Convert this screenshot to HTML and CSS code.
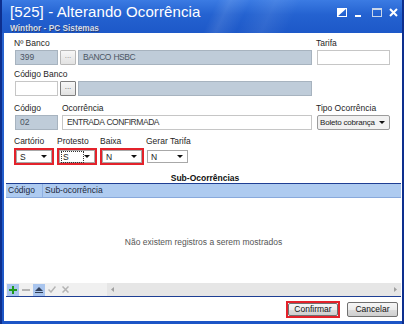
FILE: index.html
```html
<!DOCTYPE html>
<html>
<head>
<meta charset="utf-8">
<link rel="stylesheet" href="styles.css">
</head>
<body>
<div class="window">
  <div class="titlebar">
    <div class="titles">
      <div class="title">[525] - Alterando Ocorrência</div>
      <div class="subtitle">Winthor - PC Sistemas</div>
    </div>
    <div class="controls">
      <svg class="ctl" width="10" height="9" viewBox="0 0 10 9"><rect x="0.5" y="0.5" width="9" height="8" fill="none" stroke="#fff"/><polygon points="0,9 10,0 0,0" fill="#fff"/></svg>
      <svg class="ctl min" width="6" height="9" viewBox="0 0 6 9"><rect x="0" y="7" width="6" height="2" fill="#fff"/></svg>
      <svg class="ctl max" width="10" height="9" viewBox="0 0 10 9"><rect x="0.5" y="0.5" width="9" height="8" fill="none" stroke="#c9d6ea"/><rect x="0" y="0" width="10" height="2" fill="#c9d6ea"/></svg>
      <svg class="ctl close" width="9" height="9" viewBox="0 0 9 9"><path d="M1 1 L8 8 M8 1 L1 8" stroke="#fff" stroke-width="2"/></svg>
    </div>
  </div>
  <div class="client">
    <div class="form">
      <div class="row r1">
        <div class="field w297">
          <div class="lbl">Nº Banco</div>
          <div class="inputs">
            <div class="input ro w43">399</div>
            <div class="dots">...</div>
            <div class="input ro w234 caps">BANCO HSBC</div>
          </div>
        </div>
        <div class="field w73">
          <div class="lbl">Tarifa</div>
          <div class="input w73"></div>
        </div>
      </div>
      <div class="row r2">
        <div class="field w297">
          <div class="lbl">Código Banco</div>
          <div class="inputs">
            <div class="input w43"></div>
            <div class="dots focus">...</div>
            <div class="input ro w234"></div>
          </div>
        </div>
      </div>
      <div class="row r3">
        <div class="field w43">
          <div class="lbl">Código</div>
          <div class="input ro w43">02</div>
        </div>
        <div class="field w250">
          <div class="lbl">Ocorrência</div>
          <div class="input w250 caps">ENTRADA CONFIRMADA</div>
        </div>
        <div class="field w73">
          <div class="lbl">Tipo Ocorrência</div>
          <div class="select gray w73"><span class="tight">Boleto cobrança</span><i class="arrow"></i></div>
        </div>
      </div>
      <div class="row r4">
        <div class="field">
          <div class="lbl">Cartório</div>
          <div class="hl w40"><div class="select"><span>S</span><i class="arrow"></i></div></div>
        </div>
        <div class="field">
          <div class="lbl">Protesto</div>
          <div class="hl w40"><div class="select"><span class="focusbox">S</span><i class="arrow"></i></div></div>
        </div>
        <div class="field">
          <div class="lbl">Baixa</div>
          <div class="hl w44"><div class="select"><span>N</span><i class="arrow"></i></div></div>
        </div>
        <div class="field">
          <div class="lbl gt">Gerar Tarifa</div>
          <div class="plain w41"><div class="select"><span>N</span><i class="arrow"></i></div></div>
        </div>
      </div>
    </div>
    <div class="section-title">Sub-Ocorrências</div>
    <div class="grid">
      <div class="grid-head">
        <div class="col c1">Código</div>
        <div class="col c2">Sub-ocorrência</div>
      </div>
      <div class="grid-body">Não existem registros a serem mostrados</div>
      <div class="grid-toolbar">
        <div class="tb on"><svg width="8" height="8" viewBox="0 0 8 8"><path d="M4 0V8M0 4H8" stroke="#1f9a1f" stroke-width="2"/></svg></div>
        <div class="tb"><svg width="8" height="8" viewBox="0 0 8 8"><path d="M0 4H8" stroke="#b4b4b4" stroke-width="2"/></svg></div>
        <div class="tb on"><svg width="8" height="6" viewBox="0 0 8 6"><polygon points="4,0 8,4 0,4" fill="#33415a"/><rect x="0" y="5" width="8" height="1" fill="#33415a"/></svg></div>
        <div class="tb"><svg width="8" height="7" viewBox="0 0 8 7"><path d="M0.5 3.5 L3 6 L7.5 0.5" stroke="#b4b4b4" stroke-width="1.5" fill="none"/></svg></div>
        <div class="tb"><svg width="7" height="7" viewBox="0 0 7 7"><path d="M0.5 0.5 L6.5 6.5 M6.5 0.5 L0.5 6.5" stroke="#b4b4b4" stroke-width="1.5"/></svg></div>
        <div class="tb-space"></div>
        <div class="hscroll">
          <svg width="3" height="5" viewBox="0 0 3 5"><polygon points="3,0 3,5 0,2.5" fill="#a0a0a0"/></svg>
          <svg width="3" height="5" viewBox="0 0 3 5"><polygon points="0,0 0,5 3,2.5" fill="#a0a0a0"/></svg>
        </div>
      </div>
    </div>
    <div class="actions">
      <div class="hl btnwrap"><div class="btn">Confirmar</div></div>
      <div class="btn cancel">Cancelar</div>
    </div>
  </div>
</div>
</body>
</html>
```
FILE: styles.css
```css
* { box-sizing: border-box; }
html, body { margin: 0; padding: 0; }
body {
  width: 404px;
  height: 324px;
  overflow: hidden;
  font-family: "Liberation Sans", Arial, sans-serif;
  font-size: 8.5px;
  color: #222;
}
.window {
  width: 404px;
  height: 324px;
  display: flex;
  flex-direction: column;
  background: linear-gradient(to bottom, #2a66d2 0%, #1c55c6 100%);
  border-left: 2px solid #0d2f8e;
  border-right: 2px solid #0d2f8e;
  padding: 0 0 3px 2px;
}
.titlebar {
  height: 33px;
  flex: none;
  display: flex;
  justify-content: space-between;
  margin-left: -2px;
  padding-left: 8px;
  background:
    linear-gradient(115deg, transparent 0%, transparent 52%, rgba(255,255,255,0.10) 55%, transparent 60%, rgba(255,255,255,0.08) 66%, transparent 72%),
    linear-gradient(to bottom, #3b7be3 0%, #2462d0 45%, #1d58c8 100%);
}
.title {
  color: #fff;
  font-size: 15px;
  line-height: 16px;
  padding-top: 4px;
  letter-spacing: 0.1px;
}
.subtitle {
  color: #d6dde8;
  font-weight: bold;
  font-size: 8.3px;
  line-height: 10px;
  margin-top: 3px;
  text-shadow: 1px 1px 0 #29407a;
}
.controls {
  display: flex;
  align-items: flex-start;
  padding-top: 8px;
  padding-right: 4px;
}
.ctl { display: block; margin-left: 7px; }
.ctl.min { margin-left: 8px; }
.ctl.max { margin-left: 11px; }
.ctl.close { margin-left: 7px; }

.client {
  flex: 1;
  background: #fff;
  display: flex;
  flex-direction: column;
  margin-right: 0;
}
.form { padding: 5px 0 0 10px; }
.row { display: flex; align-items: flex-start; }
.r2 { margin-top: 4px; }
.r3 { margin-top: 7px; }
.r4 { margin-top: 6px; }
.r1 .field + .field, .r3 .field + .field { margin-left: 5px; }
.r3 .field.w250 { margin-left: 4px; }
.r3 .field.w43 { margin-left: 1px; }
.r1 .field.w297, .r2 .field.w297 { margin-left: 1px; }
.r1 .field.w73 .lbl, .r3 .field.w73 .lbl { margin-left: -1px; }
.r3 .field.w43 .lbl, .r1 .field.w297 .lbl, .r2 .field.w297 .lbl { margin-left: -1px; }
.r4 .field + .field { margin-left: 3px; }
.lbl {
  height: 10px;
  line-height: 10px;
  margin-bottom: 2px;
  color: #1e1e1e;
  white-space: nowrap;
}
.lbl.gt { margin-left: -1px; }
.w297 { width: 297px; }
.w43 { width: 43px; }
.w234 { width: 234px; }
.w250 { width: 250px; }
.w73 { width: 73px; }
.w40 { width: 40px; }
.w41 { width: 41px; }
.w44 { width: 44px; }
.inputs { display: flex; gap: 2px; }
.input {
  height: 15px;
  border: 1px solid #c6c6c6;
  background: #fff;
  line-height: 13px;
  padding-left: 4px;
  color: #333;
  white-space: nowrap;
  overflow: hidden;
}
.input.ro {
  background: #bfccd9;
  border-color: #a7b3bf;
  color: #4b5563;
}
.caps { letter-spacing: -0.45px; word-spacing: 0.5px; }
.dots {
  width: 16px;
  height: 15px;
  border: 1px solid #b8b8b8;
  background: linear-gradient(#f7f7f7, #e2e2e2);
  color: #8a8a8a;
  text-align: center;
  line-height: 10px;
  font-size: 8px;
  border-radius: 1px;
}
.dots.focus { border-color: #7e7e7e; color: #555; }
.select {
  height: 15px;
  border: 1px solid #a8a8a8;
  background: #fff;
  display: flex;
  align-items: center;
  justify-content: space-between;
  padding: 0 4px 0 3px;
  color: #222;
  white-space: nowrap;
}
.select.gray { background: #f1f1f1; border-color: #9c9c9c; border-radius: 2px; padding: 0 4px 0 2px; }
.tight { font-size: 8px; letter-spacing: -0.2px; }
.arrow {
  display: block;
  width: 0; height: 0;
  border-left: 3px solid transparent;
  border-right: 3px solid transparent;
  border-top: 3px solid #111;
  flex: none;
  margin-left: 2px;
}
.hl {
  border: 2px solid #e3222b;
  padding: 0;
}
.hl .select { height: 13px; }
.plain { padding: 2px 0; }
.plain .select { height: 13px; }
.focusbox {
  outline: 1px dotted #333;
  outline-offset: 1px;
  padding-right: 13px;
  line-height: 8px;
}
.section-title {
  margin-top: 8px;
  height: 10px;
  line-height: 10px;
  text-align: center;
  font-weight: bold;
  color: #111;
  padding-left: 4px;
}
.grid {
  margin: 0 1px 0 2px;
  border-top: 1px solid #1e3f94;
  border-bottom: 1px solid #1e3f94;
  display: flex;
  flex-direction: column;
}
.grid-head {
  height: 14px;
  background: #aecbf0;
  border-bottom: 1px solid #88a9dc;
  display: flex;
}
.col { line-height: 13px; color: #1e2a3c; }
.c1 { width: 37px; padding-left: 2px; border-right: 1px solid #8fb0e2; }
.c2 { padding-left: 2px; }
.grid-body {
  height: 85px;
  background: #fff;
  display: flex;
  align-items: center;
  justify-content: center;
  color: #555;
  padding-top: 2px;
}
.grid-toolbar {
  height: 13px;
  background: #f0f0f0;
  display: flex;
  align-items: center;
  padding-left: 1px;
}
.tb {
  width: 12px;
  height: 12px;
  margin-right: 1px;
  display: flex;
  align-items: center;
  justify-content: center;
}
.tb.on { background: #a9c5ee; }
.tb-space { width: 35px; height: 12px; }
.hscroll {
  flex: 1;
  height: 13px;
  background: #e6e6e6;
  display: flex;
  align-items: center;
  justify-content: space-between;
  padding: 0 4px 0 4px;
}
.actions {
  height: 24px;
  display: flex;
  justify-content: flex-end;
  align-items: flex-start;
  padding: 5px 4px 0 0;
  gap: 7px;
}
.btn {
  height: 15px;
  border: 1px solid #707070;
  border-radius: 2px;
  background: linear-gradient(#f6f6f6 0%, #ebebeb 50%, #dcdcdc 51%, #cfcfcf 100%);
  text-align: center;
  line-height: 13px;
  color: #111;
}
.btnwrap { width: 54px; height: 17px; margin-top: -1px; }
.btnwrap .btn { height: 13px; line-height: 11px; }
.btn.cancel { width: 51px; }
```
